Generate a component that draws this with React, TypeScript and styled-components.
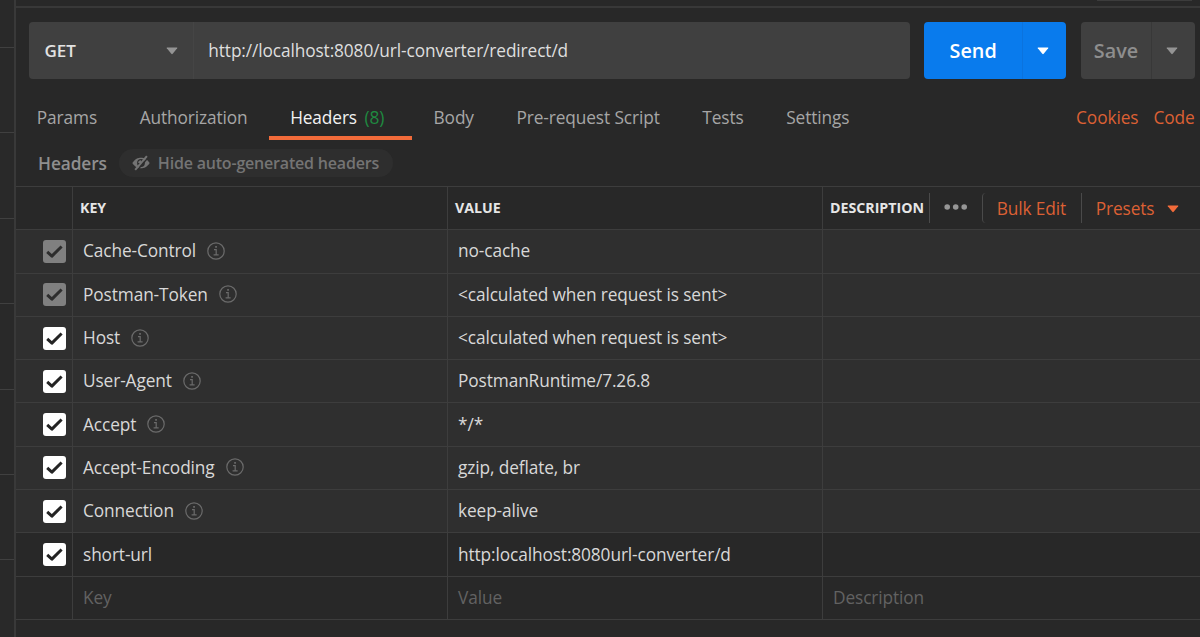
import React from "react";
import styled, { createGlobalStyle } from "styled-components";

const Global = createGlobalStyle`
  * { box-sizing: border-box; }
  html, body { margin: 0; background: #282828; }
  body { font-family: "Open Sans", "Noto Sans", sans-serif; overflow: hidden; }
  button { font: inherit; letter-spacing: inherit; border: 0; padding: 0; background: none; color: inherit; }
`;

const LINE = "#3d3d3d";
const ORANGE = "#dc6034";
const TEXT = "17.3px";
const TRACKING = "-0.11px";

const Page = styled.div`
  display: flex;
  width: 1200px;
  height: 637px;
  overflow: hidden;
  background: #282828;
`;

const Sidebar = styled.aside`
  flex: 0 0 16px;
  padding-top: 47px;
  background: #292929;
  border-right: 2px solid #393939;
`;

const SidebarEntry = styled.div`
  height: 85.4px;
  border-top: 1px solid #404040;
`;

const Main = styled.main`
  flex: 1;
  min-width: 0;
  display: flex;
  flex-direction: column;
`;

const TopStrip = styled.div`
  height: 8px;
  flex: none;
  display: flex;
  justify-content: flex-end;
  padding-right: 8px;
  border-bottom: 2px solid #383838;
`;

const TopControl = styled.div`
  width: 95px;
  height: 1px;
  background: #3c3c3c;
`;

const RequestBar = styled.div`
  display: flex;
  height: 57px;
  margin: 14px 5px 0 13px;
`;

const UrlGroup = styled.div`
  display: flex;
  width: 881.4px;
  margin-right: 13.6px;
  border-radius: 4px;
  background: #404040;
`;

const Method = styled.button`
  display: flex;
  align-items: center;
  justify-content: space-between;
  width: 165px;
  padding: 0 15.5px 0 15.5px;
  border-right: 1px solid #454545;
  color: #e2e2e2;
  font-size: 17px;
  font-weight: 600;
`;

const Url = styled.div`
  display: flex;
  align-items: center;
  padding: 0 0 0 14.3px;
  color: #dedede;
  font-size: ${TEXT};
  letter-spacing: ${TRACKING};
  white-space: nowrap;
`;

const SplitButton = styled.div<{ $bg: string; $fg: string; $gap?: number }>`
  display: flex;
  margin-right: ${(p) => p.$gap ?? 0}px;
  border-radius: 4px;
  background: ${(p) => p.$bg};
  color: ${(p) => p.$fg};
`;

const SplitLabel = styled.button<{ $w: number; $line: string }>`
  width: ${(p) => p.$w}px;
  border-right: 1px solid ${(p) => p.$line};
  font-size: 19.8px;
  font-weight: 600;
`;

const SplitArrow = styled.button`
  display: flex;
  align-items: center;
  justify-content: center;
  width: 43px;
  padding: 1px 3px 0 0;
`;

const TabBar = styled.nav`
  display: flex;
  height: 62px;
  margin-right: 5.5px;
  padding-top: 22px;
  font-size: ${TEXT};
  letter-spacing: ${TRACKING};
  color: #a6a6a6;
  white-space: nowrap;
`;

const Tab = styled.a<{ $active?: boolean }>`
  height: 39px;
  padding: 0 ${(p) => (p.$active ? 28 : 21.3)}px 0 21.3px;
  line-height: 34px;
  color: ${(p) => (p.$active ? "#f2f2f2" : "inherit")};
  border-bottom: ${(p) => (p.$active ? "4px solid #f26b3a" : "0")};

  &:first-child {
    padding-left: 20.8px;
  }
`;

const Count = styled.span`
  margin-left: 7.5px;
  color: #1f8a40;
`;

const Links = styled.div`
  display: flex;
  gap: 15px;
  margin-left: auto;
  line-height: 34px;
  color: ${ORANGE};
`;

const SubBar = styled.div`
  display: flex;
  align-items: center;
  height: 45px;
  padding: 0 0 1px 22px;
  color: #8f8f8f;
  font-size: ${TEXT};
  letter-spacing: ${TRACKING};
  font-weight: 600;
`;

const Pill = styled.button`
  display: flex;
  align-items: center;
  width: 274px;
  height: 28px;
  margin-left: 12px;
  padding: 0 0 1px 13px;
  gap: 8px;
  border-radius: 14px;
  background: #2e2e2e;
  color: #747474;
  font-size: 16px;
  letter-spacing: -0.19px;
  font-weight: 600;
  white-space: nowrap;
`;

const Table = styled.section`
  display: flex;
  flex-direction: column;
  border-top: 1px solid ${LINE};
`;

const Row = styled.div<{ $auto?: boolean; $muted?: boolean }>`
  display: grid;
  grid-template-columns: 56px 375px 375px 1fr;
  height: 43.3px;
  border-bottom: 1px solid ${LINE};
  background: ${(p) => (p.$auto ? "#2f2f2f" : "#282828")};
  color: ${(p) => (p.$muted ? "#626262" : "#d8d8d8")};
  font-size: ${TEXT};
`;

const Cell = styled.div<{ $head?: boolean }>`
  display: flex;
  align-items: center;
  min-width: 0;
  padding: 0 0 1px ${(p) => (p.$head ? 7 : 10)}px;
  border-left: 1px solid ${LINE};
  letter-spacing: ${(p) => (p.$head ? "0" : TRACKING)};
  white-space: nowrap;
  ${(p) => p.$head && "font-size: 14.2px; font-weight: 700; color: #e6e6e6;"}
`;

const CheckCell = styled.div`
  display: flex;
  align-items: center;
  padding-left: 27px;
`;

const CheckBox = styled.span<{ $off?: boolean }>`
  display: flex;
  width: 23px;
  height: 23px;
  border-radius: 3px;
  background: ${(p) => (p.$off ? "#808080" : "#ffffff")};
`;

const Info = styled.svg`
  margin-left: 11px;
`;

const HeadTools = styled.div`
  display: flex;
  align-items: center;
  height: 30px;
  margin-left: 5px;
  color: ${ORANGE};
  font-size: ${TEXT};
  letter-spacing: ${TRACKING};
  font-weight: 400;
`;

const Tool = styled.button<{ $w: number; $pad?: number; $round?: boolean }>`
  display: flex;
  align-items: center;
  width: ${(p) => p.$w}px;
  height: 30px;
  padding: 1px 0 0 ${(p) => p.$pad ?? 13.7}px;
  border-left: 1px solid #4a4a4a;
  border-radius: ${(p) => (p.$round ? "4px 0 0 4px" : "0")};
`;

const PresetArrow = styled.span`
  display: flex;
  margin-left: 13px;
  padding-top: 1px;
`;

const Caret = ({ color }: { color: string }) => (
  <svg width="12" height="8" viewBox="0 0 12 8">
    <path d="M1.2 .5h9.6q.9 0 .4.8L6.7 6.8q-.7.8-1.4 0L.8 1.3Q.3.5 1.2.5Z" fill={color} />
  </svg>
);

const Tick = ({ off }: { off?: boolean }) => (
  <svg width="23" height="23" viewBox="0 0 23 23" fill="none">
    <path
      d="M4.2 11.9L8.9 16.1L18.6 6.5"
      stroke={off ? "#2d2d2d" : "#242424"}
      strokeWidth="3"
      strokeLinejoin="round"
    />
  </svg>
);

const InfoIcon = () => (
  <Info width="18" height="18" viewBox="0 0 18 18" fill="none" stroke="#6b6b6b">
    <circle cx="9" cy="9" r="8.2" strokeWidth="1.2" />
    <path d="M7 7.6h2.2v5.2M6.6 12.9h5" strokeWidth="1.2" />
    <path d="M8.2 4.9h1.7" strokeWidth="1.6" />
  </Info>
);

const HiddenEye = () => (
  <svg width="18" height="16" viewBox="0 0 18 16">
    <path d="M.3 8C3 3.9 6 2.7 9 2.7S15 3.9 17.7 8C15 12.1 12 13.3 9 13.3S3 12.1.3 8Z" fill="#747474" />
    <circle cx="9" cy="8" r="3.9" fill="#2e2e2e" />
    <path d="M9 5.2a2.8 2.8 0 0 0-2.8 2.8L9 8Z" fill="#747474" />
    <path d="M4.6 15.9L16.1 2.4" stroke="#2e2e2e" strokeWidth="1.6" />
    <path d="M3.2 14.9L14.9 1.2" stroke="#747474" strokeWidth="2" />
  </svg>
);

const Dots = () => (
  <svg width="24" height="8" viewBox="0 0 24 8" fill="#969696">
    <circle cx="3.2" cy="3" r="2.8" />
    <circle cx="11.7" cy="3" r="2.8" />
    <circle cx="20.2" cy="3" r="2.8" />
  </svg>
);

const headers = [
  { key: "Cache-Control", value: "no-cache", auto: true, off: true },
  { key: "Postman-Token", value: "<calculated when request is sent>", auto: true, off: true },
  { key: "Host", value: "<calculated when request is sent>", auto: true },
  { key: "User-Agent", value: "PostmanRuntime/7.26.8", auto: true },
  { key: "Accept", value: "*/*", auto: true },
  { key: "Accept-Encoding", value: "gzip, deflate, br", auto: true },
  { key: "Connection", value: "keep-alive", auto: true },
  { key: "short-url", value: "http:localhost:8080url-converter/d" },
];

export default function App() {
  return (
    <Page>
      <Global />
      <Sidebar>
        {[0, 1, 2, 3, 4, 5, 6].map((n) => (
          <SidebarEntry key={n} />
        ))}
      </Sidebar>
      <Main>
        <TopStrip>
          <TopControl />
        </TopStrip>
        <RequestBar>
          <UrlGroup>
            <Method>
              <span>GET</span>
              <Caret color="#949494" />
            </Method>
            <Url>http://localhost:8080/url-converter/redirect/d</Url>
          </UrlGroup>
          <SplitButton $bg="#097bed" $fg="#ffffff" $gap={14.6}>
            <SplitLabel $w={99.4} $line="#0b73de">Send</SplitLabel>
            <SplitArrow>
              <Caret color="#ffffff" />
            </SplitArrow>
          </SplitButton>
          <SplitButton $bg="#404040" $fg="#8e8e8e">
            <SplitLabel $w={71} $line="#383838">Save</SplitLabel>
            <SplitArrow>
              <Caret color="#949494" />
            </SplitArrow>
          </SplitButton>
        </RequestBar>
        <TabBar>
          <Tab>Params</Tab>
          <Tab>Authorization</Tab>
          <Tab $active>
            Headers<Count>(8)</Count>
          </Tab>
          <Tab>Body</Tab>
          <Tab>Pre-request Script</Tab>
          <Tab>Tests</Tab>
          <Tab>Settings</Tab>
          <Links>
            <span>Cookies</span>
            <span>Code</span>
          </Links>
        </TabBar>
        <SubBar>
          <span>Headers</span>
          <Pill>
            <HiddenEye />
            Hide auto-generated headers
          </Pill>
        </SubBar>
        <Table>
          <Row>
            <CheckCell />
            <Cell $head>KEY</Cell>
            <Cell $head>VALUE</Cell>
            <Cell $head>
              DESCRIPTION
              <HeadTools>
                <Tool $w={53}>
                  <Dots />
                </Tool>
                <Tool $w={99} $round>Bulk Edit</Tool>
                <Tool $w={110}>
                  Presets
                  <PresetArrow>
                    <Caret color="#f26b3a" />
                  </PresetArrow>
                </Tool>
              </HeadTools>
            </Cell>
          </Row>
          {headers.map((h) => (
            <Row key={h.key} $auto={h.auto}>
              <CheckCell>
                <CheckBox $off={h.off}>
                  <Tick off={h.off} />
                </CheckBox>
              </CheckCell>
              <Cell>
                {h.key}
                {h.auto && <InfoIcon />}
              </Cell>
              <Cell>{h.value}</Cell>
              <Cell />
            </Row>
          ))}
          <Row $muted>
            <CheckCell />
            <Cell>Key</Cell>
            <Cell>Value</Cell>
            <Cell>Description</Cell>
          </Row>
        </Table>
      </Main>
    </Page>
  );
}
